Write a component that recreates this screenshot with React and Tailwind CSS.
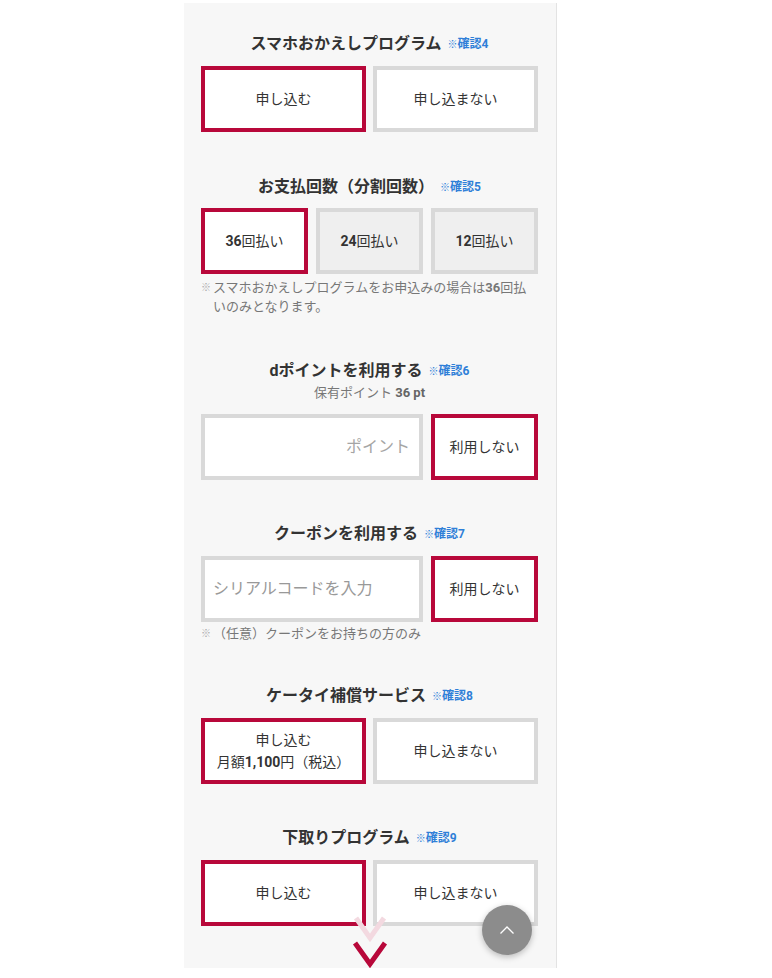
import React from 'react';

const RED = 'border-[#b8083a]';

const Title = ({ children, num }) => (
  <h3 className="text-center text-[16px] leading-6 font-bold text-[#333]">
    {children}
    <a className="ml-1.5 text-[12px] leading-none font-bold text-[#2f7fd8] align-[1px]">
      <span className="text-[10px] leading-none">※</span>確認{num}
    </a>
  </h3>
);

const Choice = ({ selected, muted, className = '', children }) => (
  <button
    className={`h-[66px] border-4 flex flex-col items-center justify-center text-[14px] leading-[22px] text-[#333] ${
      selected ? `${RED} bg-white` : muted ? 'border-[#d9d9d9] bg-[#efefef]' : 'border-[#d9d9d9] bg-white'
    } ${className}`}
  >
    {children}
  </button>
);

const Note = ({ children, className = '' }) => (
  <p className={`flex text-[13px] leading-[19px] text-[#777] ${className}`}>
    <span className="w-3 shrink-0 text-[10px] text-[#aaa]">※</span>
    <span>{children}</span>
  </p>
);

export default function App() {
  return (
    <div className="min-h-[978px] bg-white" style={{ fontFamily: 'Roboto, "Noto Sans CJK JP", sans-serif' }}>
      <div className="relative mt-[3px] ml-[184px] w-[373px] h-[965px] bg-[#f7f7f7] border-r border-[#e3e3e3] pl-[17px] pr-[18px] pt-[29px] overflow-hidden">
        {/* スマホおかえしプログラム */}
        <section>
          <Title num={4}>スマホおかえしプログラム</Title>
          <div className="mt-[10px] grid grid-cols-2 gap-[7px]">
            <Choice selected>申し込む</Choice>
            <Choice>申し込まない</Choice>
          </div>
        </section>

        {/* お支払回数 */}
        <section className="mt-[43px]">
          <Title num={5}>お支払回数（分割回数）</Title>
          <div className="mt-[9px] grid grid-cols-3 gap-2">
            <Choice selected><span><b>36</b>回払い</span></Choice>
            <Choice muted><span><b>24</b>回払い</span></Choice>
            <Choice muted><span><b>12</b>回払い</span></Choice>
          </div>
          <Note className="mt-1">
            スマホおかえしプログラムをお申込みの場合は<b>36</b>回払いのみとなります。
          </Note>
        </section>

        {/* dポイント */}
        <section className="mt-[43px]">
          <Title num={6}>dポイントを利用する</Title>
          <p className="text-center text-[13px] leading-5 text-[#777]">
            保有ポイント <b className="text-[#666]">36 pt</b>
          </p>
          <div className="mt-[11px] flex gap-2">
            <div className="flex-1 h-[66px] border-4 border-[#d9d9d9] bg-white flex items-center justify-end pr-[9px] text-[16px] text-[#a5a5a5]">
              ポイント
            </div>
            <Choice selected className="w-[107px]">利用しない</Choice>
          </div>
        </section>

        {/* クーポン */}
        <section className="mt-[42px]">
          <Title num={7}>クーポンを利用する</Title>
          <div className="mt-[10px] flex gap-2">
            <div className="flex-1 h-[66px] border-4 border-[#d9d9d9] bg-white flex items-center pl-2 text-[16px] text-[#999]">
              シリアルコードを入力
            </div>
            <Choice selected className="w-[107px]">利用しない</Choice>
          </div>
          <Note className="mt-0.5">（任意）クーポンをお持ちの方のみ</Note>
        </section>

        {/* ケータイ補償サービス */}
        <section className="mt-[41px]">
          <Title num={8}>ケータイ補償サービス</Title>
          <div className="mt-[10px] grid grid-cols-2 gap-[7px]">
            <Choice selected>
              <span>申し込む</span>
              <span>月額<b>1,100</b>円（税込）</span>
            </Choice>
            <Choice>申し込まない</Choice>
          </div>
        </section>

        {/* 下取りプログラム */}
        <section className="mt-[42px]">
          <Title num={9}>下取りプログラム</Title>
          <div className="mt-[10px] grid grid-cols-2 gap-[7px]">
            <Choice selected>申し込む</Choice>
            <Choice>申し込まない</Choice>
          </div>
        </section>

        <div className="flex justify-center mt-[-10px]">
          <svg width="36" height="54" viewBox="0 0 36 54" fill="none">
            <path d="M4 2 L18 22 L32 2" stroke="#f3d9e0" strokeWidth="5" />
            <path d="M3 27 L18 48 L33 27" stroke="#b8083a" strokeWidth="5" />
          </svg>
        </div>
      </div>

      <button className="absolute left-[482px] top-[905px] w-[50px] h-[50px] rounded-full bg-[#8c8c8c] shadow-[0_2px_6px_rgba(0,0,0,0.25)] flex items-center justify-center">
        <svg width="16" height="10" viewBox="0 0 16 10" fill="none">
          <path d="M1.5 8.5 L8 2 L14.5 8.5" stroke="#fff" strokeWidth="1.3" />
        </svg>
      </button>
    </div>
  );
}
